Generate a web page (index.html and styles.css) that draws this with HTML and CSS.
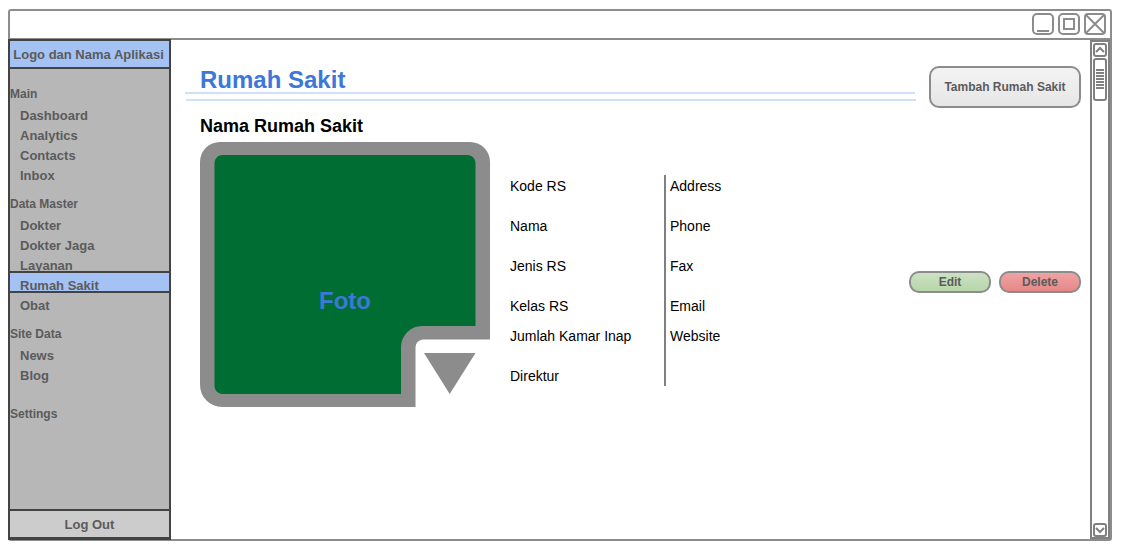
FILE: index.html
```html
<!DOCTYPE html>
<html lang="id">
<head>
<meta charset="utf-8">
<meta name="viewport" content="width=device-width, initial-scale=1">
<title>Rumah Sakit</title>
<link rel="stylesheet" href="styles.css">
</head>
<body>
<div class="window">
  <div class="titlebar">
    <button class="win-btn" type="button" aria-label="Minimize"><svg viewBox="0 0 24 24"><rect x="2" y="2" width="20" height="20" rx="4"/><path d="M6 19H18"/></svg></button>
    <button class="win-btn" type="button" aria-label="Maximize"><svg viewBox="0 0 24 24"><rect x="2" y="2" width="20" height="20" rx="4"/><rect x="7" y="7" width="10" height="10"/></svg></button>
    <button class="win-btn" type="button" aria-label="Close"><svg viewBox="0 0 24 24"><rect x="2" y="2" width="20" height="20" rx="3"/><path d="M3 3L21 21M21 3L3 21"/></svg></button>
  </div>
  <div class="body">
    <aside class="sidebar">
      <div class="brand">Logo dan Nama Aplikasi</div>
      <nav class="nav">
        <h3 class="nav-label">Main</h3>
        <ul class="nav-list">
          <li><a class="nav-link" href="#">Dashboard</a></li>
          <li><a class="nav-link" href="#">Analytics</a></li>
          <li><a class="nav-link" href="#">Contacts</a></li>
          <li><a class="nav-link" href="#">Inbox</a></li>
        </ul>
        <h3 class="nav-label">Data Master</h3>
        <ul class="nav-list">
          <li><a class="nav-link" href="#">Dokter</a></li>
          <li><a class="nav-link" href="#">Dokter Jaga</a></li>
          <li><a class="nav-link" href="#">Layanan</a></li>
          <li class="current"><a class="nav-link" href="#" aria-current="page">Rumah Sakit</a></li>
          <li><a class="nav-link" href="#">Obat</a></li>
        </ul>
        <h3 class="nav-label">Site Data</h3>
        <ul class="nav-list">
          <li><a class="nav-link" href="#">News</a></li>
          <li><a class="nav-link" href="#">Blog</a></li>
        </ul>
        <h3 class="nav-label nav-label-last">Settings</h3>
      </nav>
      <button class="logout" type="button">Log Out</button>
    </aside>
    <main class="main">
      <header class="page-head">
        <div class="title-block"><h1 class="title">Rumah Sakit</h1></div>
        <button class="btn btn-add" type="button">Tambah Rumah Sakit</button>
      </header>
      <section class="record">
        <h2 class="record-name">Nama Rumah Sakit</h2>
        <div class="record-row">
          <div class="photo">
            <svg viewBox="0 0 290 265" aria-hidden="true">
              <path fill="#8c8c8c" d="M20 0H270A20 20 0 0 1 290 20V197.500H223A8 8 0 0 0 215.500 205V265H22A22 22 0 0 1 0 243V20A20 20 0 0 1 20 0Z"/>
              <path fill="#006d33" d="M22 13H268A8 8 0 0 1 275.500 21V184H222A21 21 0 0 0 201 205V252H22A8 8 0 0 1 14.500 244V21A8 8 0 0 1 22 13Z"/>
              <path fill="#8c8c8c" d="M224 211H275.500L249.700 252Z"/>
            </svg>
            <span class="photo-text">Foto</span>
          </div>
          <div class="info">
            <ul class="fields fields-main">
              <li>Kode RS</li><li>Nama</li><li>Jenis RS</li><li>Kelas RS</li><li>Jumlah Kamar Inap</li><li>Direktur</li>
            </ul>
            <ul class="fields fields-contact">
              <li>Address</li><li>Phone</li><li>Fax</li><li>Email</li><li>Website</li>
            </ul>
            <div class="actions">
              <button class="btn btn-edit" type="button">Edit</button>
              <button class="btn btn-delete" type="button">Delete</button>
            </div>
          </div>
        </div>
      </section>
    </main>
    <div class="scroll">
      <button class="scroll-btn" type="button" aria-label="Scroll up"><svg viewBox="0 0 10 10"><path d="M1 7L5 3L9 7"/></svg></button>
      <div class="thumb"><span class="grip"></span></div>
      <button class="scroll-btn scroll-down" type="button" aria-label="Scroll down"><svg viewBox="0 0 10 10"><path d="M1 3L5 7L9 3"/></svg></button>
    </div>
  </div>
</div>
</body>
</html>
```
FILE: styles.css
```css
* { box-sizing: border-box; }
body {
  margin: 0;
  min-height: 100vh;
  display: flex;
  padding: 9px 18px 19px 8px;
  background: #fff;
  font-family: "Liberation Sans", Arial, sans-serif;
}
h1, h2, h3, ul { margin: 0; padding: 0; }
ul { list-style: none; }
button { font-family: inherit; padding: 0; cursor: pointer; }

.window {
  flex: 1;
  display: flex;
  flex-direction: column;
  border: 2px solid #8c8c8c;
  border-radius: 3px;
}
.titlebar {
  display: flex;
  justify-content: flex-end;
  gap: 2px;
  padding: 1px 3px 2px;
  border-bottom: 2px solid #8c8c8c;
}
.win-btn { width: 24px; height: 24px; border: 0; background: none; }
.win-btn svg, .scroll-btn svg {
  display: block;
  width: 100%;
  fill: none;
  stroke: #8c8c8c;
  stroke-width: 2;
}
.body { flex: 1; display: flex; }

.sidebar {
  width: 163px;
  flex: none;
  display: flex;
  flex-direction: column;
  margin: -1px 0 -1px -2px;
  background: #b7b7b7;
  border: 2px solid #434343;
  border-bottom-width: 3px;
  color: #5b5b5b;
}
.brand {
  height: 28px;
  padding: 1px 2px 0 0;
  line-height: 26px;
  font-size: 13px;
  font-weight: bold;
  text-align: center;
  white-space: nowrap;
  background: #a4c2f4;
  border-bottom: 2px solid #434343;
}
.nav { flex: 1; padding-top: 7px; }
.nav-label {
  margin: 8px 0 2px;
  font-size: 12px;
  line-height: 20px;
}
.nav-label-last { margin-top: 18px; }
.nav-link {
  display: block;
  padding-left: 10px;
  font-size: 13px;
  font-weight: bold;
  line-height: 20px;
  color: inherit;
  text-decoration: none;
}
.current {
  position: relative;
  height: 22px;
  margin: -5px 0 3px;
  padding-top: 3px;
  background: #a4c2f4;
  border: solid #434343;
  border-width: 2px 0;
}
.logout {
  height: 28px;
  border: 0;
  border-top: 2px solid #434343;
  background: #ccc;
  color: #5b5b5b;
  font-size: 13px;
  font-weight: bold;
}

.main { flex: 1; min-width: 0; padding: 26px 9px 0 14px; }
.page-head { display: flex; align-items: flex-start; gap: 13px; }
.title-block { flex: 1; }
.title {
  height: 28px;
  padding-left: 15px;
  margin-right: 1px;
  border-bottom: 2px solid #d0e0fa;
  font-size: 24px;
  line-height: 28px;
  color: #3c78d8;
}
.title-block::after {
  content: "";
  display: block;
  margin: 5px 0 0 1px;
  height: 2px;
  background: #d0e0fa;
}
.btn {
  border: 2px solid #8c8c8c;
  border-radius: 10px;
  color: #5b5b5b;
  font-size: 12px;
  font-weight: bold;
}
.btn-add {
  width: 152px;
  height: 42px;
  background: linear-gradient(#f3f3f3, #e6e6e6);
}
.record { padding-left: 15px; }
.record-name { margin: 8px 0 6px; font-size: 18px; line-height: 20px; }
.record-row { display: flex; gap: 20px; }
.photo { position: relative; width: 290px; flex: none; }
.photo svg { display: block; width: 100%; }
.photo-text {
  position: absolute;
  top: 60%;
  left: 50%;
  transform: translate(-50%, -50%);
  font-size: 24px;
  font-weight: bold;
  color: #3c78d8;
}
.info { flex: 1; display: flex; align-items: flex-start; padding-top: 33px; }
.fields {
  display: grid;
  grid-template-rows: 40px 40px 40px 30px 40px 20px;
  padding-top: 1px;
  font-size: 14px;
  line-height: 20px;
}
.fields-main { width: 154px; }
.fields-contact { padding-left: 4px; border-left: 2px solid #808080; }
.actions { display: flex; gap: 8px; margin-left: auto; padding-top: 96px; }
.btn-edit, .btn-delete { width: 82px; height: 22px; }
.btn-edit { background: linear-gradient(#cde1c3, #b7d6a9); }
.btn-delete { background: linear-gradient(#eea3a3, #e78787); }

.scroll {
  width: 20px;
  flex: none;
  display: flex;
  flex-direction: column;
  align-items: center;
  padding: 1px 0 0;
  border: 2px solid #808080;
}
.scroll-btn, .thumb {
  width: 14px;
  flex: none;
  border: 2px solid #808080;
  border-radius: 3px;
  background: #fff;
}
.scroll-btn { height: 14px; }
.scroll-btn svg { stroke: #808080; }
.thumb {
  height: 43px;
  margin-top: 1px;
  padding-top: 9px;
  display: flex;
  justify-content: center;
}
.grip {
  width: 8px;
  height: 20px;
  background: repeating-linear-gradient(#808080 0 2px, #fff 2px 3px);
}
.scroll-down { margin-top: auto; }
```
